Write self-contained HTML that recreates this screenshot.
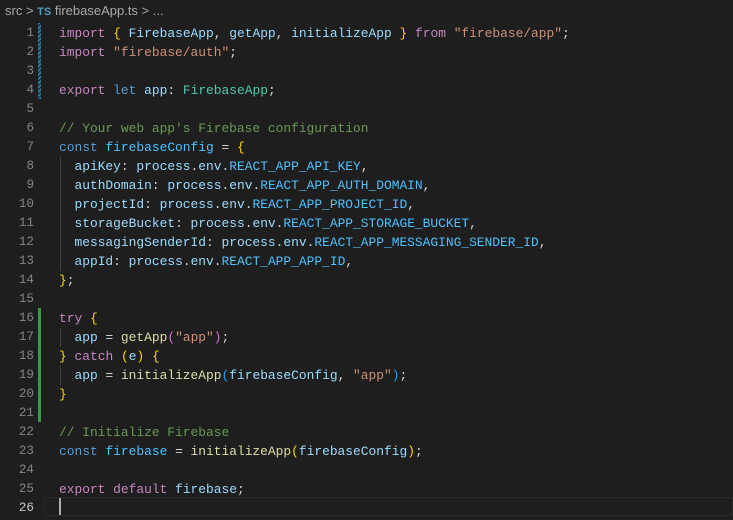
<!DOCTYPE html>
<html><head><style>
body{margin:0;width:733px;height:520px;background:#1e1e1e;overflow:hidden;position:relative;font-family:"Liberation Mono",monospace;}
.bc{position:absolute;left:5px;top:3px;font:13px "Liberation Sans",sans-serif;color:#a9a9a9;}
.bc .ts{color:#519aba;font-weight:bold;font-size:11px;}
.ln{position:absolute;left:0;width:34px;text-align:right;color:#858585;font-size:12.6px;line-height:19px;}
.code{position:absolute;left:59px;top:24px;font-size:12.9px;line-height:19px;color:#d4d4d4;white-space:pre;}
.k{color:#c586c0}.b{color:#569cd6}.v{color:#9cdcfe}.f{color:#dcdcaa}.t{color:#4ec9b0}.s{color:#ce9178}.c{color:#6a9955}.g{color:#ffd700}.p{color:#da70d6}.q{color:#179fff}.n{color:#4fc1ff}
.mk{position:absolute;left:38px;width:3px;}
.ig{position:absolute;left:60px;width:1px;background:#404040;}
</style></head><body>
<div class="bc">src &gt; <span class="ts">TS</span> firebaseApp.ts &gt; ...</div>
<div class="mk" style="top:23px;height:76px;background:repeating-linear-gradient(135deg,#1b81a8 0 2px,#1e1e1e 2px 3px)"></div>
<div class="mk" style="top:308px;height:114px;background:#2ea043"></div>
<div class="ig" style="top:157px;height:114px"></div>
<div class="ig" style="top:328px;height:19px"></div>
<div class="ig" style="top:366px;height:19px"></div>
<div style="position:absolute;left:44px;top:497px;width:689px;height:19px;border:1px solid #282828;box-sizing:border-box"></div>
<div style="position:absolute;left:59px;top:498px;width:2px;height:17px;background:#aeafad"></div>
<div class="ln" style="top:24px">1<br>2<br>3<br>4<br>5<br>6<br>7<br>8<br>9<br>10<br>11<br>12<br>13<br>14<br>15<br>16<br>17<br>18<br>19<br>20<br>21<br>22<br>23<br>24<br>25<br><span style="color:#c6c6c6">26</span></div>
<div class="code"><span class="k">import</span> <span class="g">{</span> <span class="v">FirebaseApp</span>, <span class="v">getApp</span>, <span class="v">initializeApp</span> <span class="g">}</span> <span class="k">from</span> <span class="s">"firebase/app"</span>;
<span class="k">import</span> <span class="s">"firebase/auth"</span>;

<span class="k">export</span> <span class="b">let</span> <span class="v">app</span>: <span class="t">FirebaseApp</span>;

<span class="c">// Your web app's Firebase configuration</span>
<span class="b">const</span> <span class="n">firebaseConfig</span> = <span class="g">{</span>
  <span class="v">apiKey</span>: <span class="v">process</span>.<span class="v">env</span>.<span class="n">REACT_APP_API_KEY</span>,
  <span class="v">authDomain</span>: <span class="v">process</span>.<span class="v">env</span>.<span class="n">REACT_APP_AUTH_DOMAIN</span>,
  <span class="v">projectId</span>: <span class="v">process</span>.<span class="v">env</span>.<span class="n">REACT_APP_PROJECT_ID</span>,
  <span class="v">storageBucket</span>: <span class="v">process</span>.<span class="v">env</span>.<span class="n">REACT_APP_STORAGE_BUCKET</span>,
  <span class="v">messagingSenderId</span>: <span class="v">process</span>.<span class="v">env</span>.<span class="n">REACT_APP_MESSAGING_SENDER_ID</span>,
  <span class="v">appId</span>: <span class="v">process</span>.<span class="v">env</span>.<span class="n">REACT_APP_APP_ID</span>,
<span class="g">}</span>;

<span class="k">try</span> <span class="g">{</span>
  <span class="v">app</span> = <span class="f">getApp</span><span class="p">(</span><span class="s">"app"</span><span class="p">)</span>;
<span class="g">}</span> <span class="k">catch</span> <span class="g">(</span><span class="v">e</span><span class="g">)</span> <span class="g">{</span>
  <span class="v">app</span> = <span class="f">initializeApp</span><span class="q">(</span><span class="v">firebaseConfig</span>, <span class="s">"app"</span><span class="q">)</span>;
<span class="g">}</span>

<span class="c">// Initialize Firebase</span>
<span class="b">const</span> <span class="n">firebase</span> = <span class="f">initializeApp</span><span class="g">(</span><span class="v">firebaseConfig</span><span class="g">)</span>;

<span class="k">export</span> <span class="k">default</span> <span class="v">firebase</span>;
</div>
</body></html>
